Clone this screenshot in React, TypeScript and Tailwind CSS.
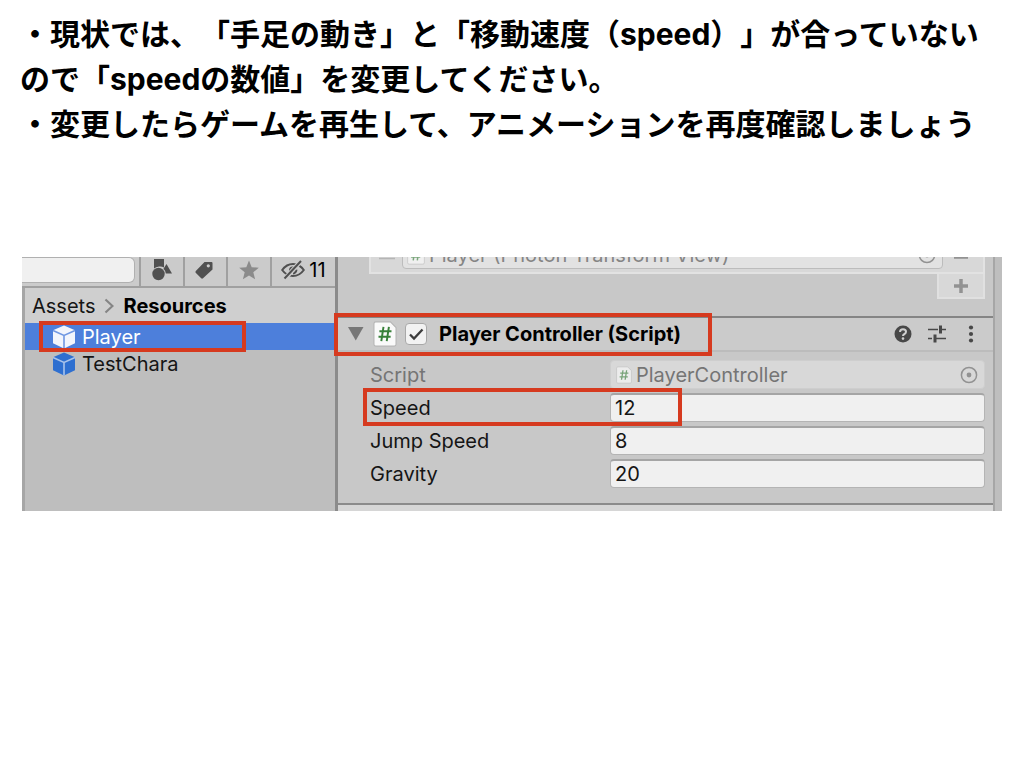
import type { ReactNode } from "react";

function Highlight({ className }: { className: string }) {
  return (
    <span
      aria-hidden="true"
      className={`pointer-events-none absolute z-10 border-4 border-[#d63a1f] ${className}`}
    />
  );
}

function CubeIcon({ fill, line }: { fill: string; line: string }) {
  return (
    <svg width="24" height="26" viewBox="0 0 24 26" aria-hidden="true">
      <path d="M12 1.5 23 6.2V19.3L12 24.5 1 19.3V6.2Z" fill={fill} />
      <path d="M1 6.6 12 11.4 23 6.6M12 11.4V24.5" fill="none" stroke={line} strokeWidth="1.6" />
    </svg>
  );
}

function ScriptIcon({ className }: { className: string }) {
  return (
    <svg className={className} viewBox="0 0 22 24" aria-hidden="true">
      <path
        d="M2.5 .8H16L21.2 6V21.5Q21.2 23.2 19.5 23.2H2.5Q.8 23.2 .8 21.5V2.500Q.8 .8 2.500 .8Z"
        fill="#fafafa"
        stroke="#b5b5b5"
        strokeWidth="1"
      />
      <path
        d="M9.600 5.500 7.600 18.500M14.600 5.500 12.600 18.500M5.800 9.500H17M5 14.500H16.200"
        fill="none"
        stroke="#38813a"
        strokeWidth="1.8"
      />
    </svg>
  );
}

function PickerIcon() {
  return (
    <svg width="18" height="18" viewBox="0 0 18 18" aria-hidden="true">
      <circle cx="9" cy="9" r="7.600" fill="none" stroke="#929292" strokeWidth="1.500" />
      <circle cx="9" cy="9" r="2.400" fill="#929292" />
    </svg>
  );
}

function ToolButton({ label, className, children }: { label: string; className: string; children: ReactNode }) {
  return (
    <button
      type="button"
      aria-label={label}
      className={`flex h-full items-center justify-center border-l-2 border-[#a0a0a0] pb-1 ${className}`}
    >
      {children}
    </button>
  );
}

function ProjectPanel() {
  return (
    <section className="flex w-[313px] shrink-0 flex-col bg-[#bebebe]">
      <div className="flex h-[31px] items-center border-b-2 border-[#a0a0a0] bg-[#cbcbcb]">
        <input
          type="text"
          aria-label="Search"
          className="mb-1 mr-1 h-[26px] min-w-0 flex-1 rounded-r-md border border-l-0 border-[#b0b0b0] bg-[#f0f0f0] px-2 text-lg outline-none"
        />
        <ToolButton label="Filter by type" className="w-11">
          <svg width="22" height="24" viewBox="0 0 22 24" fill="#505050" aria-hidden="true">
            <path d="M3 1H13V9.500Q10.500 8 8 8.500 5 9 3 10.500Z" />
            <circle cx="7.500" cy="16" r="6.200" />
            <path d="M15.500 6 21 15.500H14.800Q14.300 12.500 12.500 10.800Z" />
          </svg>
        </ToolButton>
        <ToolButton label="Filter by label" className="w-[43px] pr-1">
          <svg width="20" height="20" viewBox="0 0 20 20" aria-hidden="true">
            <path
              d="M10.500 2H17.500Q18.500 2 18.500 3V9.500L9 18.300Q8 19 7.200 18.200L1.700 12.700Q1 12 1.800 11Z"
              fill="#505050"
            />
            <circle cx="14.300" cy="5.800" r="1.600" fill="#cbcbcb" />
          </svg>
        </ToolButton>
        <ToolButton label="Favorites" className="w-11">
          <svg width="22" height="22" viewBox="0 0 22 22" aria-hidden="true">
            <path d="M11 1.500 13.700 8.200 20.800 8.700 15.300 13.300 17.100 20.300 11 16.400 4.900 20.300 6.700 13.300 1.200 8.700 8.300 8.200Z" fill="#8b8b8b" />
          </svg>
        </ToolButton>
        <button
          type="button"
          aria-label="11 hidden packages"
          className="flex h-full w-[65px] items-center justify-center gap-1 border-l-2 border-[#a0a0a0] pb-1 text-xl text-black"
        >
          <svg width="24" height="20" viewBox="0 0 24 20" fill="none" stroke="#505050" strokeWidth="2" aria-hidden="true">
            <path d="M1.200 10Q5.500 4 12 4T22.800 10Q18.500 16 12 16T1.200 10Z" />
            <path d="M12.500 6.500Q8 6 8 10.500L9.500 13.500 15.500 7.500Z" fill="#505050" stroke="none" />
            <path d="M12 13.500Q15 13 15.500 9.500" />
            <path d="M4.500 18 20 1" stroke="#cbcbcb" strokeWidth="4.500" />
            <path d="M3.500 18.500 20 1" />
          </svg>
          11
        </button>
      </div>
      <div className="flex flex-1 flex-col border-l-[3px] border-[#a6a6a6]">
        <nav aria-label="Folder path" className="flex h-[35px] items-center gap-[9px] bg-[#cfcfcf] pl-[7px] text-xl text-[#151515]">
          <a href="#assets">Assets</a>
          <svg width="10" height="16" viewBox="0 0 10 16" fill="none" stroke="#858585" strokeWidth="2.200" aria-hidden="true">
            <path d="M1.500 1.500 8.500 8 1.500 14.500" />
          </svg>
          <a href="#resources" className="font-bold text-black">Resources</a>
        </nav>
        <ul className="text-xl">
          <li className="relative flex h-[27px] items-center gap-[6px] bg-[#4d7fdb] pl-[27px] text-white">
            <CubeIcon fill="#f2f5fc" line="#6f97e2" />
            Player
            <Highlight className="-top-[2px] left-[14px] h-[31px] w-[207px]" />
          </li>
          <li className="flex h-[27px] items-center gap-[6px] pl-[27px] text-[#151515]">
            <CubeIcon fill="#2e6fd0" line="#a9c3ea" />
            TestChara
          </li>
        </ul>
      </div>
    </section>
  );
}

function NumberRow({ id, label, value, highlighted }: { id: string; label: string; value: string; highlighted?: boolean }) {
  return (
    <div className="relative flex h-[29px] items-center">
      <label htmlFor={id} className="w-60 shrink-0">{label}</label>
      <input
        id={id}
        type="text"
        inputMode="numeric"
        defaultValue={value}
        className="h-full min-w-0 flex-1 rounded border border-t-2 border-[#b4b4b4] border-t-[#a5a5a5] bg-[#f0f0f0] px-1 outline-none"
      />
      {highlighted && <Highlight className="-left-[7px] -top-[5px] h-[38px] w-[319px]" />}
    </div>
  );
}

function InspectorPanel() {
  return (
    <section className="flex min-w-0 flex-1 flex-col border-l-[3px] border-[#8b8b8b] bg-[#c8c8c8]">
      <div className="flex h-[59px] flex-col pl-[31px] pr-2">
        <div className="flex h-[17px] shrink-0 items-end overflow-hidden border-x-2 border-b-2 border-[#e2e2e2] bg-[#d8d8d8] text-[#858585]">
          <svg width="16" height="17" viewBox="0 0 16 17" className="ml-2 shrink-0" stroke="#b5b5b5" strokeWidth="1.500" aria-hidden="true">
            <path d="M0 3.500H16" />
          </svg>
          <div className="mb-[3px] ml-[7px] flex h-7 min-w-0 flex-1 items-center rounded border border-[#bcbcbc] bg-[#e2e2e2] pl-1 text-xl">
            <ScriptIcon className="mr-1 h-5 w-[18px] shrink-0 opacity-60" />
            <span className="flex-1 truncate leading-7">Player (Photon Transform View)</span>
            <span className="mr-[6px]"><PickerIcon /></span>
          </div>
          <svg width="14" height="17" viewBox="0 0 14 17" className="ml-[11px] mr-[15px] shrink-0" aria-hidden="true">
            <path d="M0 2.500H14" stroke="#929292" strokeWidth="2.500" />
          </svg>
        </div>
        <button
          type="button"
          aria-label="Add component"
          className="flex h-[25px] w-12 items-center justify-center self-end border-2 border-t-0 border-[#e0e0e0] bg-[#d8d8d8]"
        >
          <svg width="14" height="14" viewBox="0 0 14 14" stroke="#929292" strokeWidth="3.500" aria-hidden="true">
            <path d="M0 7H14M7 0V14" />
          </svg>
        </button>
      </div>
      <header className="relative flex h-9 items-center border-b-2 border-t-2 border-b-[#bcbcbc] border-t-[#858585] bg-[#cbcbcb] pl-[10px] pr-[13px]">
        <button type="button" aria-label="Collapse Player Controller">
          <svg width="16" height="14" viewBox="0 0 16 14" className="block" aria-hidden="true">
            <path d="M0 0H15.500L7.750 13.500Z" fill="#777" />
          </svg>
        </button>
        <ScriptIcon className="ml-[9px] h-[26px] w-6 shrink-0" />
        <span className="relative ml-2 flex h-[22px] w-[22px] shrink-0">
          <input
            id="enabled"
            type="checkbox"
            defaultChecked
            className="peer h-full w-full appearance-none rounded-sm border border-[#a8a8a8] bg-[#f2f2f2]"
          />
          <svg viewBox="0 0 22 22" className="pointer-events-none absolute inset-0 hidden peer-checked:block" aria-hidden="true">
            <path d="M5 11.500 9 15.500 17.500 6.500" fill="none" stroke="#3c3c3c" strokeWidth="2.300" />
          </svg>
        </span>
        <label htmlFor="enabled" className="ml-3 flex-1 text-xl font-bold text-black">
          Player Controller (Script)
        </label>
        <div className="flex items-center gap-4 text-[#484848]">
          <button type="button" aria-label="Help">
            <svg width="18" height="18" viewBox="0 0 18 18" className="block" aria-hidden="true">
              <circle cx="9" cy="9" r="8.500" fill="currentColor" />
              <path d="M6 7Q6 4.200 9 4.200T12 6.800Q12 8.200 10.500 9T9 11" fill="none" stroke="#d0d0d0" strokeWidth="2" />
              <circle cx="9" cy="13.600" r="1.300" fill="#d0d0d0" />
            </svg>
          </button>
          <button type="button" aria-label="Presets">
            <svg width="18" height="18" viewBox="0 0 18 18" className="block" fill="none" stroke="currentColor" strokeWidth="1.600" aria-hidden="true">
              <path d="M0 4.500H10M14 4.500H18M0 13.500H4M8 13.500H18" />
              <path d="M12.500 .5V8.500M7 9.500V17.500" strokeWidth="3" />
            </svg>
          </button>
          <button type="button" aria-label="More options">
            <svg width="18" height="18" viewBox="0 0 18 18" className="block" fill="currentColor" aria-hidden="true">
              <circle cx="9" cy="2.500" r="2.100" />
              <circle cx="9" cy="9" r="2.100" />
              <circle cx="9" cy="15.500" r="2.100" />
            </svg>
          </button>
        </div>
        <Highlight className="-left-[4px] -top-[5px] h-[43px] w-[378px]" />
      </header>
      <div className="flex flex-col gap-1 pb-[15px] pl-8 pr-2 pt-2 text-xl text-[#151515]">
        <div className="flex h-[29px] items-center text-[#757575]">
          <span className="w-60 shrink-0">Script</span>
          <div className="flex h-full min-w-0 flex-1 items-center rounded border border-[#cecece] bg-[#d8d8d8] pl-[5px] pr-[6px]">
            <ScriptIcon className="mr-1 h-5 w-4 shrink-0 opacity-60" />
            <span className="flex-1 truncate">PlayerController</span>
            <button type="button" aria-label="Select script"><PickerIcon /></button>
          </div>
        </div>
        <NumberRow id="speed" label="Speed" value="12" highlighted />
        <NumberRow id="jump-speed" label="Jump Speed" value="8" />
        <NumberRow id="gravity" label="Gravity" value="20" />
      </div>
      <div className="h-2 border-t-2 border-[#8b8b8b] bg-[#d6d6d6]" />
    </section>
  );
}

export default function App() {
  return (
    <main className="min-h-screen bg-white">
      <div className="pl-5 pt-3 font-['Inter','Noto_Sans_CJK_JP',sans-serif] text-[30px] font-bold leading-[45px] text-black [text-spacing-trim:space-all]">
        <p>
          ・現状では、「手足の動き」と「移動速度（speed）」が合っていない
          <br />
          ので「speedの数値」を変更してください。
        </p>
        <p>・変更したらゲームを再生して、アニメーションを再度確認しましょう</p>
      </div>
      <div className="mx-[22px] mt-[110px] flex overflow-hidden font-['Inter',sans-serif] leading-6">
        <ProjectPanel />
        <InspectorPanel />
        <div className="w-[9px] shrink-0 border-l-2 border-[#a6a6a6] bg-[#bebebe]" />
      </div>
    </main>
  );
}
